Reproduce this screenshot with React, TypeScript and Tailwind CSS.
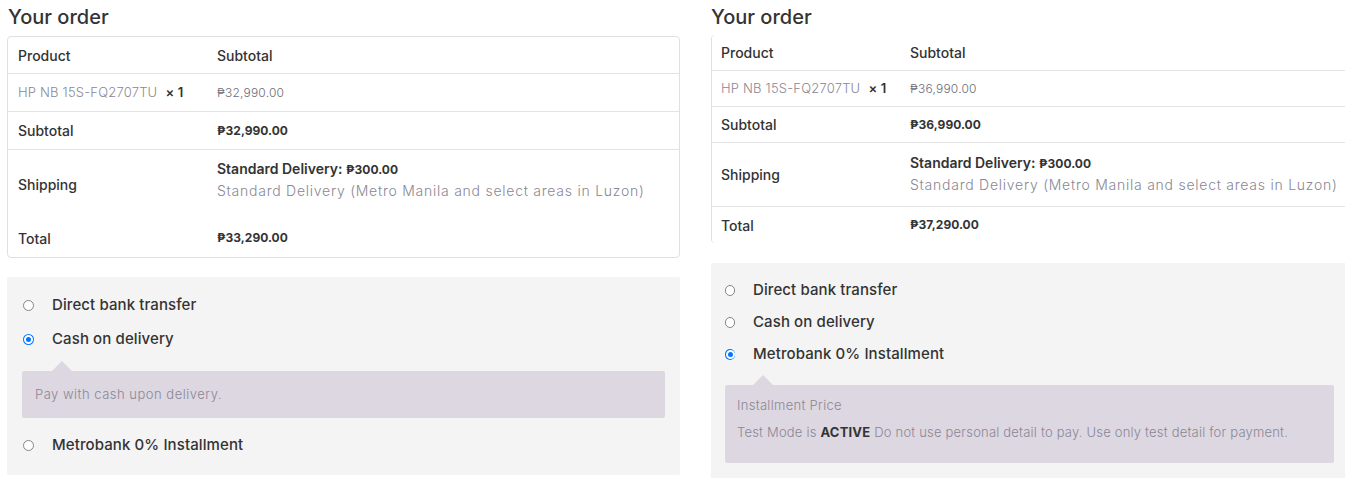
import React from "react";

type Method = { id: string; label: string };

const METHODS: Method[] = [
  { id: "bacs", label: "Direct bank transfer" },
  { id: "cod", label: "Cash on delivery" },
  { id: "metrobank", label: "Metrobank 0% Installment" },
];

function Radio({ checked }: { checked: boolean }) {
  if (checked) {
    return (
      <span className="flex h-[11px] w-[11px] items-center justify-center rounded-full bg-[#0075ff]">
        <span className="h-[9px] w-[9px] rounded-full border-[2px] border-white bg-[#0075ff]" />
      </span>
    );
  }
  return (
    <span className="h-[11px] w-[11px] rounded-full border border-[#858585] bg-white" />
  );
}

function MethodRow({
  method,
  checked,
  height,
  radioCol,
}: {
  method: Method;
  checked: boolean;
  height: string;
  radioCol: string;
}) {
  return (
    <div className={`flex items-center ${height}`}>
      <span className={`flex justify-center ${radioCol}`}>
        <Radio checked={checked} />
      </span>
      <span className="text-[15px] font-medium tracking-[0.1px] text-[#333333]">{method.label}</span>
    </div>
  );
}

function Pointer({ left }: { left: string }) {
  return (
    <span
      className={`absolute -top-[10px] h-0 w-0 border-x-[10px] border-b-[10px] border-x-transparent border-b-[#ddd7e1] ${left}`}
    />
  );
}

function OrderTable({
  product,
  subtotal,
  total,
  variant,
}: {
  product: string;
  subtotal: string;
  total: string;
  variant: "full" | "edge";
}) {
  const full = variant === "full";
  const rowH = full ? "h-[38px]" : "h-[36px]";
  const labelW = full ? "w-[209px] pl-[10px]" : "w-[198px] pl-[9px]";
  const line = "border-b border-[#e4e4e4]";

  return (
    <div
      className={
        full
          ? "rounded-[4px] border border-[#e0e0e0]"
          : "rounded-l-[4px] border-l border-[#e0e0e0]"
      }
    >
      <div className={`flex items-center ${full ? "h-[37px]" : "h-[36px]"} ${line}`}>
        <span className={`${labelW} text-[14px] font-medium text-[#333333]`}>Product</span>
        <span className="text-[14px] font-medium text-[#333333]">Subtotal</span>
      </div>
      <div className={`flex items-center ${rowH} ${line}`}>
        <span className={`${labelW} whitespace-nowrap text-[13px] font-light tracking-[0.2px] text-[#8a8794]`}>
          {product}
          <strong className="ml-[8px] font-semibold text-[#333333]">× 1</strong>
        </span>
        <span className="text-[12px] font-light tracking-[0.2px] text-[#6f6d78]">{subtotal}</span>
      </div>
      <div className={`flex items-center ${rowH} ${line}`}>
        <span className={`${labelW} text-[14px] font-medium text-[#333333]`}>Subtotal</span>
        <span className="text-[12px] font-bold text-[#333333]">{subtotal}</span>
      </div>
      <div className={`flex items-center ${full ? "h-[69px]" : `h-[64px] ${line}`}`}>
        <span className={`${labelW} text-[14px] font-medium text-[#333333]`}>Shipping</span>
        <div className={`flex flex-col ${full ? "-mt-[8px]" : "-mt-[1px]"}`}>
          <span className="text-[14px] font-semibold leading-[20px] text-[#333333]">
            Standard Delivery: <span className="text-[12px] font-bold">₱300.00</span>
          </span>
          <span className="whitespace-nowrap text-[14px] font-light leading-[22px] tracking-[0.75px] text-[#8a8794]">
            Standard Delivery (Metro Manila and select areas in Luzon)
          </span>
        </div>
      </div>
      <div className={`flex items-center ${rowH}`}>
        <span className={`${labelW} text-[14px] font-medium text-[#333333]`}>Total</span>
        <span className="text-[12px] font-bold text-[#333333]">{total}</span>
      </div>
    </div>
  );
}

export default function App() {
  return (
    <div className="flex h-[478px] w-[1345px] overflow-hidden bg-white font-['Inter','Noto_Sans',sans-serif]">
      {/* left: cash on delivery selected */}
      <div className="ml-[7px] w-[673px] shrink-0">
        <h3 className="h-[36px] pl-[1px] pt-[4px] text-[20px] font-medium leading-[26px] text-[#333333]">
          Your order
        </h3>
        <OrderTable
          product="HP NB 15S-FQ2707TU"
          subtotal="₱32,990.00"
          total="₱33,290.00"
          variant="full"
        />
        <div className="mt-[19px] rounded-[2px] bg-[#f4f4f4] pb-[13px] pl-[15px] pr-[15px] pt-[11px]">
          <MethodRow method={METHODS[0]} checked={false} height="h-[34px]" radioCol="w-[12px] mr-[18px]" />
          <MethodRow method={METHODS[1]} checked={true} height="h-[34px]" radioCol="w-[12px] mr-[18px]" />
          <div className="relative mt-[15px] flex h-[47px] items-center rounded-[2px] bg-[#ddd7e1] pl-[13px]">
            <Pointer left="left-[30px]" />
            <span className="text-[13px] font-light tracking-[0.5px] text-[#8a8794]">
              Pay with cash upon delivery.
            </span>
          </div>
          <div className="mt-[10px]">
            <MethodRow method={METHODS[2]} checked={false} height="h-[34px]" radioCol="w-[12px] mr-[18px]" />
          </div>
        </div>
      </div>

      {/* right: metrobank selected, panel runs past the window */}
      <div className="ml-[31px] w-[638px] shrink-0">
        <h3 className="h-[35px] pt-[4px] text-[20px] font-medium leading-[26px] text-[#333333]">
          Your order
        </h3>
        <OrderTable
          product="HP NB 15S-FQ2707TU"
          subtotal="₱36,990.00"
          total="₱37,290.00"
          variant="edge"
        />
        <div className="mt-[20px] h-[230px] rounded-l-[2px] bg-[#f4f4f4] pl-[14px] pr-[15px] pt-[11px]">
          <MethodRow method={METHODS[0]} checked={false} height="h-[32px]" radioCol="w-[10px] mr-[18px]" />
          <MethodRow method={METHODS[1]} checked={false} height="h-[32px]" radioCol="w-[10px] mr-[18px]" />
          <MethodRow method={METHODS[2]} checked={true} height="h-[32px]" radioCol="w-[10px] mr-[18px]" />
          <div className="relative mt-[15px] flex h-[78px] flex-col gap-[11px] rounded-[2px] bg-[#ddd7e1] pl-[12px] pt-[12px]">
            <Pointer left="left-[28px]" />
            <span className="text-[13px] font-light leading-[16px] tracking-[0.3px] text-[#8a8794]">
              Installment Price
            </span>
            <span className="text-[13px] font-light leading-[16px] tracking-[0.2px] text-[#8a8794]">
              Test Mode is <strong className="font-bold text-[#333333]">ACTIVE</strong> Do not use personal
              detail to pay. Use only test detail for payment.
            </span>
          </div>
        </div>
      </div>
    </div>
  );
}
